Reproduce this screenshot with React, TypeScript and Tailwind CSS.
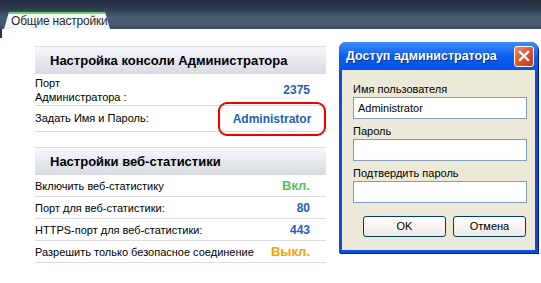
import React from 'react';

const FONT = { fontFamily: '"Liberation Sans", Arial, sans-serif' };

interface Row {
  label: React.ReactNode;
  value: string;
  color: string;
  h: string;
}

const consoleRows: Row[] = [
  { label: <>Порт<br />Администратора :</>, value: '2375', color: 'text-[#1c5fb4]', h: 'h-[32px]' },
];

const statRows: Row[] = [
  { label: 'Включить веб-статистику', value: 'Вкл.', color: 'text-[#5ec05e] text-[13px]', h: 'h-[22px]' },
  { label: 'Порт для веб-статистики:', value: '80', color: 'text-[#1c5fb4]', h: 'h-[22px]' },
  { label: 'HTTPS-порт для веб-статистики:', value: '443', color: 'text-[#1c5fb4]', h: 'h-[22px]' },
  { label: 'Разрешить только безопасное соединение', value: 'Выкл.', color: 'text-[#f5a400] text-[13px]', h: 'h-[22px]' },
];

function SectionHeader({ title }: { title: string }) {
  return (
    <div className="h-[28px] border-t border-[#d9dee3] bg-gradient-to-b from-[#f6f7f9] to-[#d6dce2] flex items-center pl-[15px]">
      <span className="text-[13px] font-bold text-black whitespace-nowrap">{title}</span>
    </div>
  );
}

function SettingRow({ row }: { row: Row }) {
  return (
    <div className={`${row.h} border-b border-[#d9dee3] flex items-center justify-between pr-[16px]`}>
      <span className="text-[11px] leading-[14px] text-black whitespace-nowrap">{row.label}</span>
      <span className={`font-bold text-[12px] ${row.color}`}>{row.value}</span>
    </div>
  );
}

function Field({ label, value }: { label: string; value?: string }) {
  return (
    <div className="flex flex-col">
      <span className="text-[11px] leading-[13px] text-black mb-[1px]">{label}</span>
      <div className="h-[22px] bg-white border border-[#7f9db9] flex items-center px-[4px] text-[11px] text-black">
        {value}
      </div>
    </div>
  );
}

function XpButton({ children, w }: { children: string; w: string }) {
  return (
    <button className={`${w} h-[21px] rounded-[3px] border border-[#003c74] bg-gradient-to-b from-white to-[#ece9e0] text-[11px] text-black flex items-center justify-center`}>
      {children}
    </button>
  );
}

function AccessDialog() {
  return (
    <div className="absolute left-[339px] top-[42px] w-[199px] h-[211px] flex flex-col rounded-t-[7px] bg-[#0a4fd9] shadow-[1px_1px_0_#00138c]">
      {/* title bar */}
      <div className="h-[28px] rounded-t-[7px] bg-gradient-to-b from-[#3d8cf8] via-[#0a5ff0] to-[#0552e6] flex items-center justify-between pl-[7px] pr-[4px]">
        <span className="text-white font-bold text-[12.5px] whitespace-nowrap [text-shadow:1px_1px_0_#0a2a8a]">Доступ администратора</span>
        <div className="w-[20px] h-[21px] rounded-[3px] border border-white bg-gradient-to-br from-[#f08a6a] via-[#e0532c] to-[#c23a12] flex items-center justify-center">
          <svg width="12" height="12" viewBox="0 0 12 12">
            <path d="M2 2 L10 10 M10 2 L2 10" stroke="white" strokeWidth="2.4" strokeLinecap="square" />
          </svg>
        </div>
      </div>
      {/* body */}
      <div className="flex-1 mx-[3px] mb-[3px] bg-[#ece9d8] flex flex-col pl-[11px] pr-[8px] pt-[13px] gap-[6px]">
        <Field label="Имя пользователя" value="Administrator" />
        <Field label="Пароль" />
        <Field label="Подтвердить пароль" />
        <div className="flex justify-between pl-[10px] pr-[1px] mt-[7px]">
          <XpButton w="w-[83px]">OK</XpButton>
          <XpButton w="w-[73px]">Отмена</XpButton>
        </div>
      </div>
    </div>
  );
}

export default function App() {
  return (
    <div className="relative w-[541px] h-[283px] overflow-hidden bg-white" style={FONT}>
      {/* top bar with tab */}
      <div className="h-[29px] bg-[linear-gradient(to_bottom,#222d3d_0%,#2f3c50_30%,#4a5b72_60%,#465770_85%,#3b4a5f_100%)] flex items-end pl-[4px]">
        <div className="w-[106px] h-[17px] bg-gradient-to-b from-white to-[#f1f3f5] [clip-path:polygon(5px_0,101px_0,106px_100%,0_100%)] relative flex items-end pl-[7px] pb-[1px]">
          <div className="absolute left-[5px] right-[5px] top-0 h-[2px] bg-[#5fd66a]" />
          <span className="text-[12px] leading-[14px] tracking-[-0.2px] text-[#2b2b2b] whitespace-nowrap">Общие настройки</span>
        </div>
      </div>

      <div className="absolute left-0 top-[29px] w-[2px] h-[9px] bg-[#2a3444]" />

      {/* settings panel */}
      <div className="ml-[35px] mt-[17px] w-[291px] flex flex-col">
        <SectionHeader title="Настройка консоли Администратора" />
        {consoleRows.map((r, i) => <SettingRow key={i} row={r} />)}
        <div className="h-[26px] border-b border-[#d9dee3] flex items-center justify-between">
          <span className="text-[11px] text-black whitespace-nowrap">Задать Имя и Пароль:</span>
          <div className="w-[108px] h-[34px] border-2 border-[#ee0000] rounded-[9px] flex items-center justify-center">
            <span className="font-bold text-[12px] text-[#1c5fb4]">Administrator</span>
          </div>
        </div>
        <div className="h-[15px]" />
        <SectionHeader title="Настройки веб-статистики" />
        {statRows.map((r, i) => <SettingRow key={i} row={r} />)}
      </div>

      <AccessDialog />
    </div>
  );
}
